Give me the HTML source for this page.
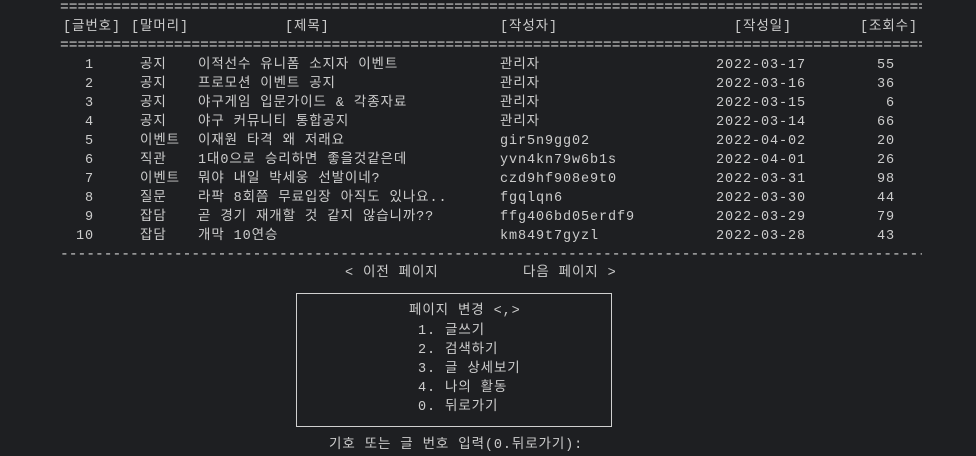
<!DOCTYPE html>
<html><head><meta charset="utf-8"><style>
html,body{margin:0;padding:0;background:#1e1f22;}
body{width:976px;height:456px;position:relative;overflow:hidden;color:#cccccc;font-family:"Liberation Mono","Noto Sans CJK KR",monospace;font-size:13.5px;letter-spacing:0.9px;}
.t{position:absolute;white-space:pre;line-height:18px;}
.r{text-align:right;}
.line{position:absolute;left:60px;width:862px;overflow:hidden;white-space:pre;line-height:18px;letter-spacing:0;font-size:14.6px;}
.box{position:absolute;left:296px;top:293px;width:314px;height:132px;border:1px solid #d0d0d0;}
</style></head><body>
<div class="line" style="top:-1px">====================================================================================================</div>
<div class="t" style="left:63px;top:19px">[글번호]</div>
<div class="t" style="left:131px;top:19px">[말머리]</div>
<div class="t" style="left:285px;top:19px">[제목]</div>
<div class="t" style="left:500px;top:19px">[작성자]</div>
<div class="t" style="left:734px;top:19px">[작성일]</div>
<div class="t" style="left:860px;top:19px">[조회수]</div>
<div class="line" style="top:37px">====================================================================================================</div>

<div class="t r" style="left:60px;width:34px;top:56px">1<br>2<br>3<br>4<br>5<br>6<br>7<br>8<br>9<br>10</div>
<div class="t" style="left:140px;top:56px;line-height:19px">공지
공지
공지
공지
이벤트
직관
이벤트
질문
잡담
잡담</div>
<div class="t" style="left:198px;top:56px;line-height:19px">이적선수 유니폼 소지자 이벤트
프로모션 이벤트 공지
야구게임 입문가이드 &amp; 각종자료
야구 커뮤니티 통합공지
이재원 타격 왜 저래요
1대0으로 승리하면 좋을것같은데
뭐야 내일 박세웅 선발이네?
라팍 8회쯤 무료입장 아직도 있나요..
곧 경기 재개할 것 같지 않습니까??
개막 10연승</div>
<div class="t" style="left:500px;top:56px;line-height:19px">관리자
관리자
관리자
관리자
gir5n9gg02
yvn4kn79w6b1s
czd9hf908e9t0
fgqlqn6
ffg406bd05erdf9
km849t7gyzl</div>
<div class="t" style="left:716px;top:56px;line-height:19px">2022-03-17
2022-03-16
2022-03-15
2022-03-14
2022-04-02
2022-04-01
2022-03-31
2022-03-30
2022-03-29
2022-03-28</div>
<div class="t r" style="left:840px;width:55px;top:56px;line-height:19px">55
36
6
66
20
26
98
44
79
43</div>
<style>.t[style*="top:56px"]{line-height:19px}</style>
<div class="line" style="top:246px">----------------------------------------------------------------------------------------------------</div>
<div class="t" style="left:345px;top:265px">&lt; 이전 페이지</div>
<div class="t" style="left:523px;top:265px">다음 페이지 &gt;</div>
<div class="box"></div>
<div class="t" style="left:409px;top:303px">페이지 변경 &lt;,&gt;</div>
<div class="t" style="left:418px;top:322px;line-height:19px">1. 글쓰기
2. 검색하기
3. 글 상세보기
4. 나의 활동
0. 뒤로가기</div>
<div class="t" style="left:329px;top:437px">기호 또는 글 번호 입력(0.뒤로가기):</div>
</body></html>
